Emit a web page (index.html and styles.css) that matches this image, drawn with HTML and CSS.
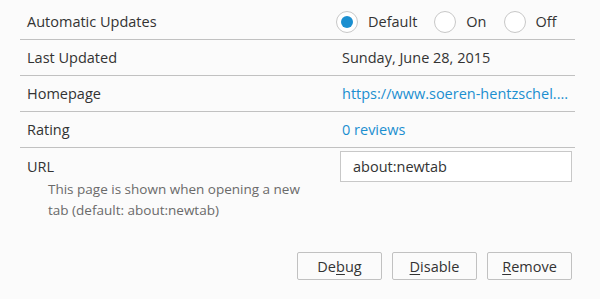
FILE: index.html
```html
<!DOCTYPE html>
<html>
<head>
<meta charset="utf-8">
<link rel="stylesheet" href="styles.css">
</head>
<body>
<div class="details">
  <div class="row">
    <div class="label">Automatic Updates</div>
    <div class="value radios">
      <label class="radio"><span class="circle checked"></span><span>Default</span></label>
      <label class="radio"><span class="circle"></span><span>On</span></label>
      <label class="radio"><span class="circle"></span><span>Off</span></label>
    </div>
  </div>
  <div class="row">
    <div class="label">Last Updated</div>
    <div class="value text">Sunday, June 28, 2015</div>
  </div>
  <div class="row">
    <div class="label">Homepage</div>
    <div class="value text link">https://www.soeren-hentzschel....</div>
  </div>
  <div class="row">
    <div class="label">Rating</div>
    <div class="value text link">0 reviews</div>
  </div>
  <div class="row pref">
    <div class="pref-main">
      <div class="label">URL</div>
      <div class="desc">This page is shown when opening a new tab (default: about:newtab)</div>
    </div>
    <div class="value">
      <div class="input">about:newtab</div>
    </div>
  </div>
  <div class="buttons">
    <button class="btn">De<u>b</u>ug</button>
    <button class="btn"><u>D</u>isable</button>
    <button class="btn"><u>R</u>emove</button>
  </div>
</div>
</body>
</html>
```
FILE: styles.css
```css
html, body {
  margin: 0;
  padding: 0;
  background: #fbfbfb;
}
body {
  font-family: "Open Sans", "Noto Sans", sans-serif;
  font-size: 14.5px;
  color: #424e5a;
}
.details {
  width: 555px;
  margin-left: 20px;
  padding-top: 4px;
}
.row {
  display: grid;
  grid-template-columns: 316px 1fr;
  height: 35px;
  align-items: center;
  border-bottom: 1px solid #c1c1c1;
}
.label {
  padding-left: 7px;
  color: #333;
}
.text {
  padding-left: 6px;
  color: #333;
}
.link {
  color: #1b8fd0;
}
.radios {
  display: flex;
  align-items: center;
}
.radio {
  display: flex;
  align-items: center;
  margin-right: 17px;
  color: #333;
}
.circle {
  width: 22px;
  height: 22px;
  border: 1px solid #c8c8c8;
  border-radius: 50%;
  background: #fff;
  margin-right: 10px;
  box-sizing: border-box;
  position: relative;
}
.circle.checked::after {
  content: "";
  position: absolute;
  left: 4px;
  top: 4px;
  width: 12px;
  height: 12px;
  border-radius: 50%;
  background: #1b8fd0;
}
.pref {
  border-bottom: none;
  height: auto;
  align-items: start;
  padding-top: 3px;
}
.pref .label {
  line-height: 31px;
}
.desc {
  padding-left: 28px;
  font-size: 13.5px;
  line-height: 21px;
  color: #6a6a6a;
  width: 262px;
  margin-top: -3px;
}
.pref .value {
  padding-left: 4px;
}
.input {
  width: 232px;
  height: 31px;
  box-sizing: border-box;
  border: 1px solid #c8c8c8;
  background: #fff;
  padding-left: 12px;
  line-height: 29px;
  color: #333;
}
.buttons {
  display: flex;
  justify-content: flex-end;
  gap: 10px;
  margin-top: 31px;
  padding-right: 3px;
}
.btn {
  width: 85px;
  height: 28px;
  font-family: inherit;
  font-size: 14.5px;
  color: #333;
  background: #fbfbfb;
  border: 1px solid #c1c1c1;
  border-radius: 2px;
  padding: 0;
}
.btn u {
  text-decoration-thickness: 1px;
  text-underline-offset: 2px;
}
```
